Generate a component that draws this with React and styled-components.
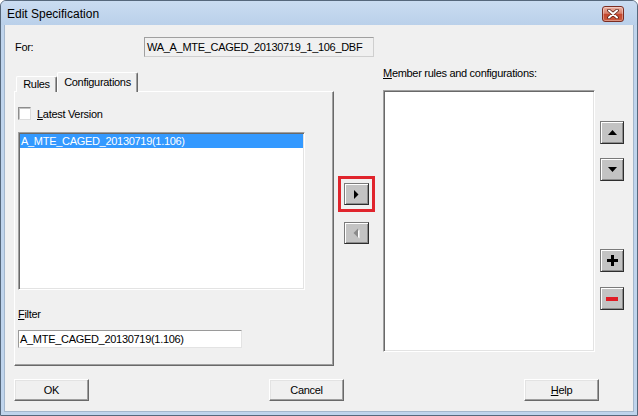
import React from "react";
import styled, { createGlobalStyle } from "styled-components";

const GlobalStyle = createGlobalStyle`
  *, *::before, *::after { box-sizing: border-box; }
  html, body { margin: 0; padding: 0; background: #ffffff; }
  body { font-family: "Liberation Sans", Arial, sans-serif; }
`;

const Window = styled.div`
  width: 638px;
  height: 416px;
  display: flex;
  flex-direction: column;
  background: #bfd4ec;
  border: 1px solid #56687c;
  border-radius: 6px 6px 0 0;
  overflow: hidden;
`;

const TitleBar = styled.div`
  height: 24px;
  display: flex;
  align-items: center;
  padding: 2px 0 0 6px;
  background: linear-gradient(#cadcf1, #bad0ea);
  font-family: "Liberation Sans", Arial, sans-serif;
  font-size: 12px;
  color: #000;
`;

const CloseButton = styled.div`
  margin-left: auto;
  margin-right: 13px;
  width: 22px;
  height: 16px;
  border: 1px solid #7b2d22;
  border-radius: 3px;
  background: linear-gradient(#eab1a3 0%, #d8806c 45%, #c4462e 52%, #cb5a3e 100%);
  box-shadow: inset 0 0 0 1px rgba(255, 255, 255, 0.35);
  display: flex;
  align-items: center;
  justify-content: center;
`;

const Client = styled.div`
  flex: 1;
  display: flex;
  flex-direction: column;
  margin: 0 3px 3px;
  background: #f0f0f0;
  border: 1px solid #a4b7cc;
  border-top: none;
  padding: 12px 0 0 9px;
  font-size: 11px;
  letter-spacing: -0.3px;
  color: #000;
`;

const ForRow = styled.div`
  display: flex;
  align-items: center;
  height: 20px;
`;

const ForLabel = styled.div`
  width: 130px;
  padding-left: 1px;
`;

const ReadOnlyField = styled.div`
  width: 230px;
  height: 20px;
  background: #f0f0f0;
  border: 1px solid;
  border-color: #a0a0a0 #cfcfcf #cfcfcf #a0a0a0;
  padding-left: 2px;
  line-height: 18px;
  white-space: nowrap;
  overflow: hidden;
`;

const Main = styled.div`
  display: flex;
  margin-top: 15px;
  height: 294px;
`;

const LeftCol = styled.div`
  width: 320px;
  display: flex;
  flex-direction: column;
`;

const TabStrip = styled.div`
  display: flex;
  align-items: flex-end;
  height: 20px;
  padding-left: 2px;
  margin-bottom: -1px;
  position: relative;
  z-index: 1;
`;

const Tab = styled.div`
  width: ${(p) => (p.$active ? 81 : 41)}px;
  height: ${(p) => (p.$active ? 20 : 16)}px;
  line-height: ${(p) => (p.$active ? 18 : 14)}px;
  text-align: center;
  background: #f0f0f0;
  border-top: 1px solid #ffffff;
  border-left: 1px solid #ffffff;
  border-right: 1px solid #696969;
  border-radius: 2px 2px 0 0;
  box-shadow: inset -1px 0 0 #a0a0a0;
`;

const Panel = styled.div`
  height: 275px;
  border-top: 1px solid #ffffff;
  border-left: 1px solid #ffffff;
  border-right: 1px solid #696969;
  border-bottom: 1px solid #696969;
  box-shadow: inset -1px -1px 0 #a0a0a0;
  padding: 15px 0 0 3px;
  display: flex;
  flex-direction: column;
`;

const CheckRow = styled.div`
  display: flex;
  align-items: center;
  gap: 6px;
  height: 13px;
`;

const Checkbox = styled.div`
  width: 13px;
  height: 13px;
  background: #ffffff;
  border: 1px solid;
  border-color: #8d8d8d #dcdcdc #dcdcdc #8d8d8d;
  box-shadow: inset 1px 1px 0 #c4c4c4;
`;

const ListBox = styled.div`
  width: ${(p) => p.$w}px;
  height: ${(p) => p.$h}px;
  margin-top: ${(p) => p.$mt}px;
  background: #ffffff;
  border: 1px solid;
  border-color: #a0a0a0 #ffffff #ffffff #a0a0a0;
  box-shadow: inset 1px 1px 0 #696969, inset -1px -1px 0 #e3e3e3;
  padding: 1px;
`;

const ListItem = styled.div`
  height: 14px;
  line-height: 14px;
  padding-left: 1px;
  background: #3399ff;
  color: #ffffff;
  white-space: nowrap;
`;

const SmallLabel = styled.div`
  line-height: 13px;
  height: 13px;
  margin-top: ${(p) => p.$mt || 0}px;
  white-space: nowrap;
`;

const Underline = styled.span`
  text-decoration: underline;
  text-underline-offset: 1px;
`;

const TextInput = styled.div`
  width: 224px;
  height: 18px;
  margin-top: 9px;
  background: #ffffff;
  border: 1px solid;
  border-color: #9a9a9a #e3e3e3 #e3e3e3 #9a9a9a;
  padding-left: 1px;
  line-height: 16px;
  white-space: nowrap;
`;

const MidCol = styled.div`
  width: 49px;
  padding: 104px 0 0 4px;
  display: flex;
  flex-direction: column;
`;

const Highlight = styled.div`
  width: 37px;
  height: 36px;
  border: 3px solid #e0242c;
  padding: 4px 3px;
`;

const IconButton = styled.div`
  width: ${(p) => p.$w || 25}px;
  height: ${(p) => p.$h || 22}px;
  margin-top: ${(p) => p.$mt || 0}px;
  margin-left: ${(p) => p.$ml || 0}px;
  background: #c3c3c3;
  border: 1px solid;
  border-color: #7a7a7a #2e2e2e #2e2e2e #7a7a7a;
  box-shadow: inset 1px 1px 0 #ffffff, inset -1px -1px 0 #8c8c8c;
  display: flex;
  align-items: center;
  justify-content: center;
  flex-shrink: 0;
`;

const RightCol = styled.div`
  width: 212px;
  display: flex;
  flex-direction: column;
`;

const SideCol = styled.div`
  width: 24px;
  margin-left: 5px;
  padding-top: 49px;
  display: flex;
  flex-direction: column;
`;

const Footer = styled.div`
  display: flex;
  gap: 180px;
  margin-top: 13px;
`;

const DialogButton = styled.div`
  width: 75px;
  height: 22px;
  background: #f0f0f0;
  border: 1px solid;
  border-color: #ffffff #696969 #696969 #ffffff;
  box-shadow: inset -1px -1px 0 #a0a0a0, inset 1px 1px 0 #e3e3e3;
  display: flex;
  align-items: center;
  justify-content: center;
  font-size: 11px;
`;

const CloseIcon = () => (
  <svg width="12" height="10" viewBox="0 0 12 10">
    <path d="M2 1.5 L10 8.5 M10 1.5 L2 8.5" stroke="#5a2017" strokeWidth="3.6" strokeLinecap="round" />
    <path d="M2 1.5 L10 8.5 M10 1.5 L2 8.5" stroke="#ffffff" strokeWidth="2" strokeLinecap="round" />
  </svg>
);

const RightArrow = () => (
  <svg width="5" height="9" viewBox="0 0 5 9">
    <polygon points="0,0 4.5,4.5 0,9" fill="#000" />
  </svg>
);

const LeftArrowDisabled = () => (
  <svg width="7" height="11" viewBox="0 0 7 11">
    <polygon points="5.5,1 1,5.5 5.5,10" fill="#ffffff" transform="translate(1,0.5)" />
    <polygon points="5,0.5 0.5,5 5,9.5" fill="#8a8a8a" />
  </svg>
);

const UpArrow = () => (
  <svg width="9" height="5" viewBox="0 0 9 5">
    <polygon points="0,5 4.5,0 9,5" fill="#000" />
  </svg>
);

const DownArrow = () => (
  <svg width="9" height="5" viewBox="0 0 9 5">
    <polygon points="0,0 9,0 4.5,5" fill="#000" />
  </svg>
);

const PlusIcon = () => (
  <svg width="11" height="11" viewBox="0 0 11 11">
    <rect x="4" y="0" width="3" height="11" fill="#000" />
    <rect x="0" y="4" width="11" height="3" fill="#000" />
  </svg>
);

const MinusIcon = () => (
  <svg width="12" height="4" viewBox="0 0 12 4">
    <rect x="0" y="0" width="12" height="4" fill="#e01b24" />
  </svg>
);

export default function App() {
  return (
    <>
      <GlobalStyle />
      <Window>
        <TitleBar>
          <span>Edit Specification</span>
          <CloseButton>
            <CloseIcon />
          </CloseButton>
        </TitleBar>
        <Client>
          <ForRow>
            <ForLabel>For:</ForLabel>
            <ReadOnlyField>WA_A_MTE_CAGED_20130719_1_106_DBF</ReadOnlyField>
          </ForRow>
          <Main>
            <LeftCol>
              <TabStrip>
                <Tab>Rules</Tab>
                <Tab $active>Configurations</Tab>
              </TabStrip>
              <Panel>
                <CheckRow>
                  <Checkbox />
                  <span>
                    <Underline>L</Underline>atest Version
                  </span>
                </CheckRow>
                <ListBox $w={287} $h={158} $mt={12}>
                  <ListItem>A_MTE_CAGED_20130719(1.106)</ListItem>
                </ListBox>
                <SmallLabel $mt={18}>
                  <Underline>F</Underline>ilter
                </SmallLabel>
                <TextInput>A_MTE_CAGED_20130719(1.106)</TextInput>
              </Panel>
            </LeftCol>
            <MidCol>
              <Highlight>
                <IconButton>
                  <RightArrow />
                </IconButton>
              </Highlight>
              <IconButton $mt={10} $ml={6}>
                <LeftArrowDisabled />
              </IconButton>
            </MidCol>
            <RightCol>
              <SmallLabel $mt={-5}>
                <Underline>M</Underline>ember rules and configurations:
              </SmallLabel>
              <ListBox $w={212} $h={262} $mt={10} />
            </RightCol>
            <SideCol>
              <IconButton $w={24} $h={23}>
                <UpArrow />
              </IconButton>
              <IconButton $w={24} $h={23} $mt={14}>
                <DownArrow />
              </IconButton>
              <IconButton $w={24} $h={23} $mt={68}>
                <PlusIcon />
              </IconButton>
              <IconButton $w={24} $h={23} $mt={15}>
                <MinusIcon />
              </IconButton>
            </SideCol>
          </Main>
          <Footer>
            <DialogButton>OK</DialogButton>
            <DialogButton>Cancel</DialogButton>
            <DialogButton>
              <span>
                <Underline>H</Underline>elp
              </span>
            </DialogButton>
          </Footer>
        </Client>
      </Window>
    </>
  );
}
